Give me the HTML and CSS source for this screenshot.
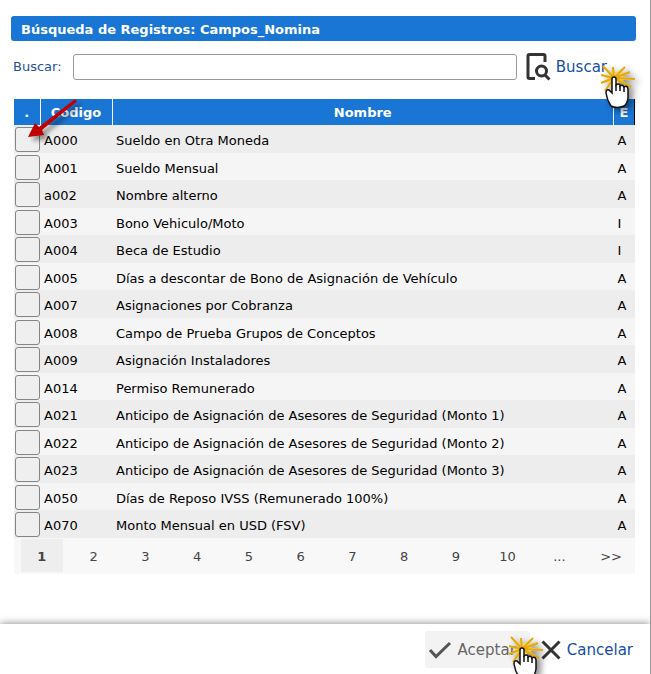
FILE: index.html
```html
<!DOCTYPE html>
<html lang="es">
<head>
  <meta charset="UTF-8"/>
  <title>Búsqueda de Registros</title>
  <meta name="viewport" content="width=device-width,initial-scale=1"/>
  <link rel="stylesheet" href="styles.css">
</head>
<body>

  <svg class="defs" aria-hidden="true">
    <symbol id="click" viewBox="0 0 40 46">
      <path class="burst" d="M16 13 L5 2 L13 8 L15 3 L17 9 L27 3 L21 9 L32 8 L23 12 L37 15 L24 16 L33 23 L21 18 L19 27 L16 18 L7 27 L11 18 L3 19 L10 15 L3 11 L11 12 Z"/>
      <path class="burst-line" d="M16 14 L5 2 M16 14 L15 3 M16 14 L27 3 M16 14 L32 8 M16 14 L37 15 M16 14 L33 23 M16 14 L3 11 M16 14 L3 19 M16 14 L7 27"/>
      <path class="hand" d="M14 15 Q14 13 16 13 Q18 13 18 15 V21 Q20 19 22 21 V22 Q24.500 20 26 23 Q29.500 21 30 25 V34 Q29 40 26 42 Q19 45 13 42 Q9 36 8 29 Q8 25 11 26 L14 29 Z"/>
      <path class="fingers" d="M18 21 V27 M22 22 V27 M26 23 V28"/>
    </symbol>
  </svg>

  <div class="page">
    <main>
      <h1>Búsqueda de Registros: Campos_Nomina</h1>

      <form class="search">
        <label for="buscar">Buscar:</label>
        <input type="text" id="buscar">
        <button type="button" class="action">
          <svg class="icon-find" viewBox="0 0 26 30" aria-hidden="true"><path d="M9 26.500 H3.500 Q2 26.500 2 25 V4 Q2 2.500 3.500 2.500 H17.500 Q19 2.500 19 4 V10"/><circle cx="15.500" cy="19" r="5"/><path d="M19 23 L23.500 27.500"/></svg>
          Buscar
          <svg class="click click-find" aria-hidden="true"><use href="#click"/></svg>
        </button>
      </form>

      <div class="grid">
        <table>
          <thead>
            <tr><th class="col-sel">.</th><th class="col-cod">Código</th><th>Nombre</th><th class="col-est">E</th></tr>
          </thead>
          <tbody>
            <tr><td><input type="checkbox" aria-label="A000"></td><td>A000</td><td>Sueldo en Otra Moneda</td><td>A</td></tr>
            <tr><td><input type="checkbox" aria-label="A001"></td><td>A001</td><td>Sueldo Mensual</td><td>A</td></tr>
            <tr><td><input type="checkbox" aria-label="a002"></td><td>a002</td><td>Nombre alterno</td><td>A</td></tr>
            <tr><td><input type="checkbox" aria-label="A003"></td><td>A003</td><td>Bono Vehiculo/Moto</td><td>I</td></tr>
            <tr><td><input type="checkbox" aria-label="A004"></td><td>A004</td><td>Beca de Estudio</td><td>I</td></tr>
            <tr><td><input type="checkbox" aria-label="A005"></td><td>A005</td><td>Días a descontar de Bono de Asignación de Vehículo</td><td>A</td></tr>
            <tr><td><input type="checkbox" aria-label="A007"></td><td>A007</td><td>Asignaciones por Cobranza</td><td>A</td></tr>
            <tr><td><input type="checkbox" aria-label="A008"></td><td>A008</td><td>Campo de Prueba Grupos de Conceptos</td><td>A</td></tr>
            <tr><td><input type="checkbox" aria-label="A009"></td><td>A009</td><td>Asignación Instaladores</td><td>A</td></tr>
            <tr><td><input type="checkbox" aria-label="A014"></td><td>A014</td><td>Permiso Remunerado</td><td>A</td></tr>
            <tr><td><input type="checkbox" aria-label="A021"></td><td>A021</td><td>Anticipo de Asignación de Asesores de Seguridad (Monto 1)</td><td>A</td></tr>
            <tr><td><input type="checkbox" aria-label="A022"></td><td>A022</td><td>Anticipo de Asignación de Asesores de Seguridad (Monto 2)</td><td>A</td></tr>
            <tr><td><input type="checkbox" aria-label="A023"></td><td>A023</td><td>Anticipo de Asignación de Asesores de Seguridad (Monto 3)</td><td>A</td></tr>
            <tr><td><input type="checkbox" aria-label="A050"></td><td>A050</td><td>Días de Reposo IVSS (Remunerado 100%)</td><td>A</td></tr>
            <tr><td><input type="checkbox" aria-label="A070"></td><td>A070</td><td>Monto Mensual en USD (FSV)</td><td>A</td></tr>
          </tbody>
        </table>
        <nav class="pager">
          <a href="#" class="current">1</a>
          <a href="#">2</a>
          <a href="#">3</a>
          <a href="#">4</a>
          <a href="#">5</a>
          <a href="#">6</a>
          <a href="#">7</a>
          <a href="#">8</a>
          <a href="#">9</a>
          <a href="#">10</a>
          <a href="#">...</a>
          <a href="#">&gt;&gt;</a>
        </nav>
        <svg class="arrow" viewBox="0 0 64 50" aria-hidden="true"><path d="M61 0 L63 2.500 L28 31 L30 36 L14 38 L21 24 L25 28 Z"/></svg>
      </div>
    </main>

    <footer>
      <button type="button" class="action accept">
        <svg class="icon-check" viewBox="0 0 24 20" aria-hidden="true"><path d="M2 10 L8 16.500 L22 3"/></svg>
        Aceptar
        <svg class="click click-accept" aria-hidden="true"><use href="#click"/></svg>
      </button>
      <button type="button" class="action">
        <svg class="icon-close" viewBox="0 0 20 20" aria-hidden="true"><path d="M1.500 1.500 L18.500 18.500 M18.500 1.500 L1.500 18.500"/></svg>
        Cancelar
      </button>
    </footer>
  </div>

</body>
</html>
```
FILE: styles.css
```css
*{box-sizing:border-box;}
body{margin:0;background:#fff;color:#000;font:13px/20px Verdana,"DejaVu Sans",sans-serif;}
button,input{font:inherit;margin:0;}
.defs{position:absolute;width:0;height:0;}
.page{display:flex;flex-direction:column;min-height:100vh;overflow:hidden;border-right:1px solid #999;}
main{flex:1;padding:16px 14px 0 11px;}

h1{margin:0;padding:4px 10px 1px;background:#1976d5;color:#fff;font-size:13px;line-height:20px;border-radius:3px;}

.search{display:flex;align-items:center;height:52px;padding-left:2px;}
.search label{width:60px;font-size:13px;color:#2450a0;}
.search input{flex:1;min-width:0;height:26px;padding:0 6px;border:1px solid #999;border-radius:3px;background:#fff;}
.action{position:relative;display:flex;align-items:center;gap:6px;padding:0;border:0;background:none;color:#174ea6;font-size:15px;cursor:pointer;}
.search .action{margin:0 29px 0 9px;gap:4px;}
.action svg{flex:none;fill:none;stroke:#333;stroke-width:3;}
.icon-find{width:26px;height:30px;}

.grid{position:relative;margin:6px 1px 0 3px;}
table{width:100%;border-collapse:collapse;table-layout:fixed;}
th{height:26px;padding:2px 0 0;background:#1976d5;color:#fff;border-right:1px solid #fff;}
th:last-child{border-right-color:#000;}
.col-sel{width:26px;}
.col-cod{width:72px;}
.col-est{width:21px;}
td{height:27px;padding:4px 4px 0;line-height:20px;}
td:first-child{padding:1px 1px 0;}
tbody tr{background:#f5f5f5;}
tbody tr:nth-child(odd){background:#ededed;}
tbody tr:nth-child(odd) td{height:28px;}
td input{appearance:none;display:block;width:25px;height:25px;border:1px solid #858585;border-radius:3px;background:#efefef;}

.pager{display:flex;gap:10px;padding:1px 3px 2px 7px;background:#f8f8f8;}
.pager a{flex:1 1 0;padding-top:2px;line-height:31px;text-align:center;color:#444;text-decoration:none;}
.pager .current{background:#eee;font-weight:bold;}

footer{display:flex;justify-content:flex-end;gap:11px;height:50px;padding:7px 17px 6px;background:#fff;box-shadow:0 0 8px rgba(0,0,0,.5);}
.accept{padding:0 14px 0 3px;background:#f3f3f3;border-radius:3px;color:#666;}
.accept svg{stroke:#555;}
.icon-check{width:24px;height:20px;}
.icon-close{width:20px;height:20px;}

/* click markers and pointer arrow over the form */
.action .click{position:absolute;z-index:1;width:40px;height:46px;stroke:none;filter:drop-shadow(4px 3px 3px rgba(0,0,0,.45));}
.click-find{left:72px;top:12px;}
.click-accept{left:81px;top:4px;}
.burst{fill:#f8d568;stroke:none;}
.burst-line{fill:none;stroke:#e6aa08;stroke-width:2;}
.hand{fill:#fff;stroke:#111;stroke-width:1.5;}
.fingers{fill:none;stroke:#111;stroke-width:1.5;}
.arrow{position:absolute;left:0;top:0;width:64px;height:50px;fill:#c00000;filter:drop-shadow(4px 4px 2px rgba(0,0,0,.4));pointer-events:none;}
```
